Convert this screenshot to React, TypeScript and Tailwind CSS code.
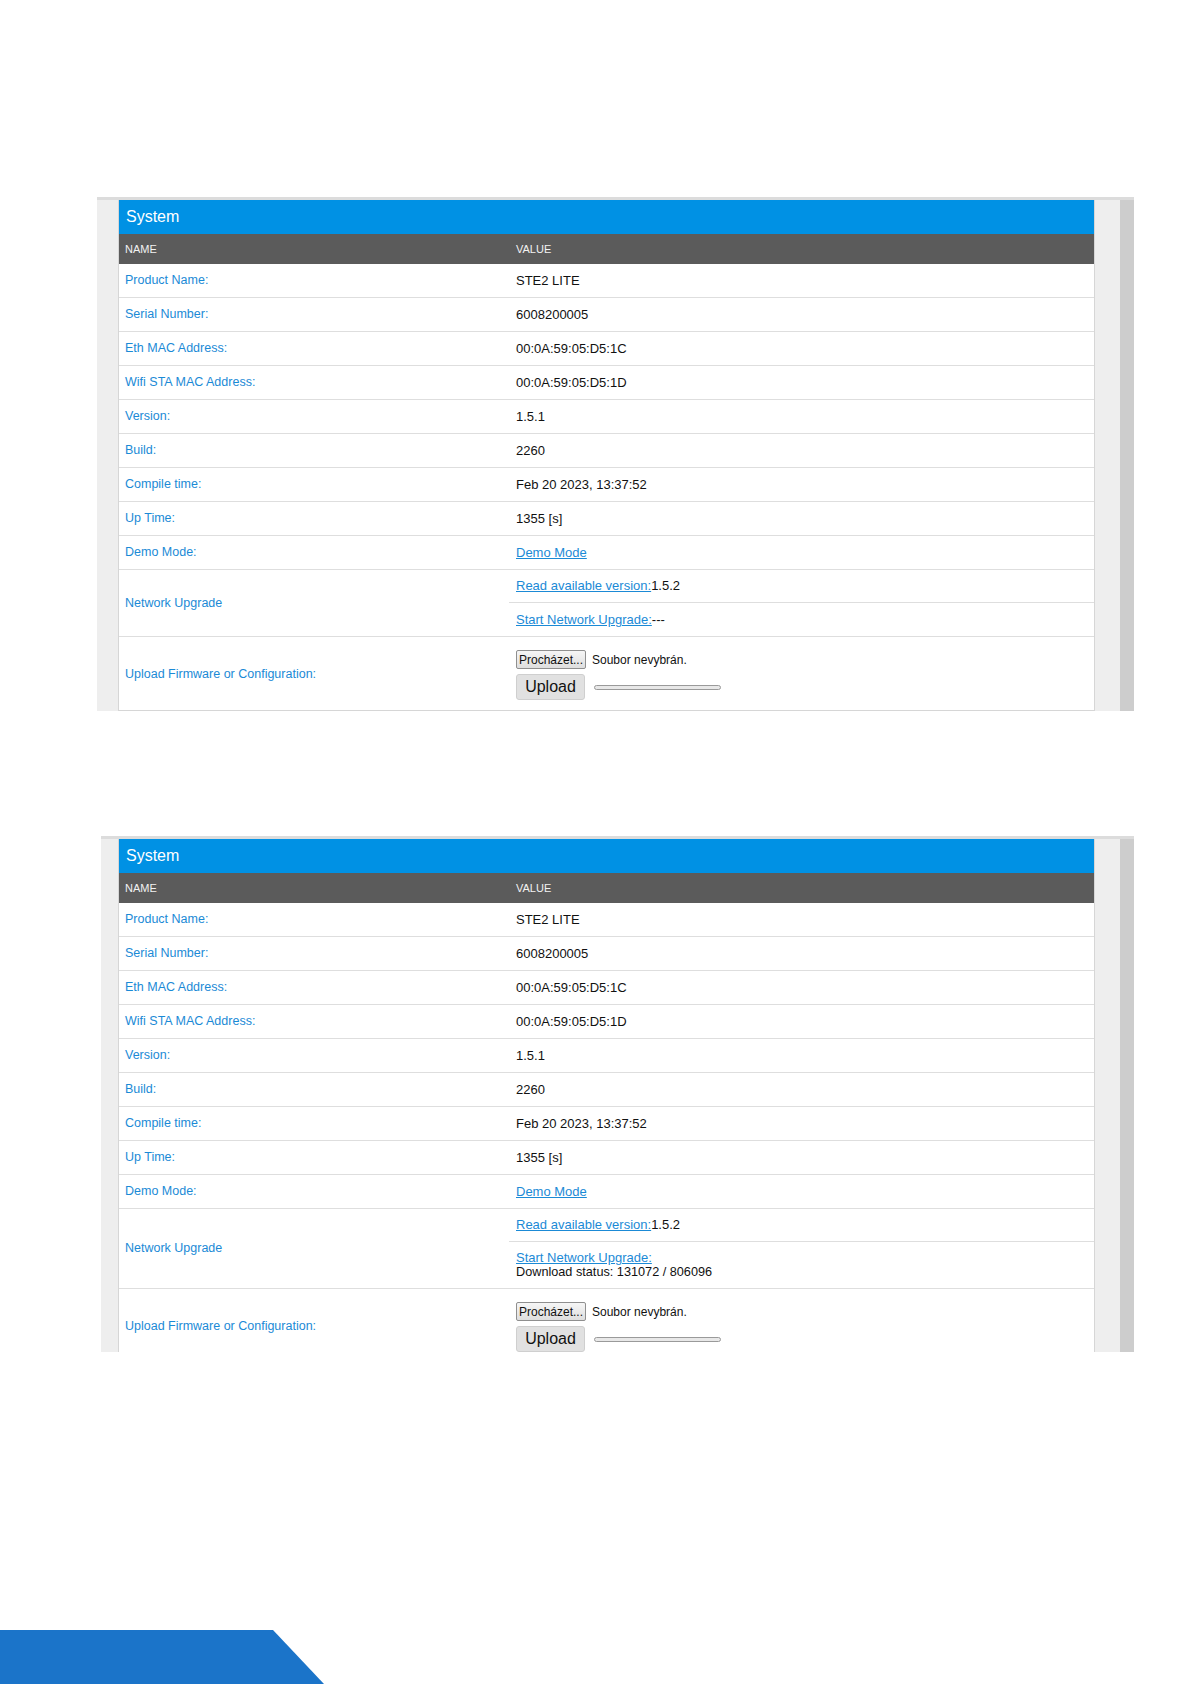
import React from 'react';

const rows: [string, string][] = [
  ['Product Name:', 'STE2 LITE'],
  ['Serial Number:', '6008200005'],
  ['Eth MAC Address:', '00:0A:59:05:D5:1C'],
  ['Wifi STA MAC Address:', '00:0A:59:05:D5:1D'],
  ['Version:', '1.5.1'],
  ['Build:', '2260'],
  ['Compile time:', 'Feb 20 2023, 13:37:52'],
  ['Up Time:', '1355 [s]'],
];

function Row({ label, children }: { label: string; children: React.ReactNode }) {
  return (
    <div className="grid grid-cols-[390px_1fr] h-[34px] items-center border-b border-[#dedede] shrink-0">
      <div className="pl-[6px] text-[#1b8ad6] text-[12.5px]">{label}</div>
      <div className="pl-[7px] text-[#111]">{children}</div>
    </div>
  );
}

function SystemPanel({ downloading, className }: { downloading?: boolean; className: string }) {
  return (
    <div className={`flex bg-[#eeeeee] border-t-[3px] border-[#dcdcdc] overflow-hidden shrink-0 ${className}`}>
      <div className="flex-1" />
      {/* Panel */}
      <div className={`w-[977px] bg-white flex flex-col border-x border-[#d6d6d6] ${downloading ? '' : 'border-b'}`}>
        <div className="h-[34px] bg-[#0091e4] text-white text-[16px] flex items-center pl-[7px] shrink-0">System</div>
        <div className="grid grid-cols-[390px_1fr] h-[30px] items-center bg-[#5b5b5b] text-[#f2f2f2] text-[11px] shrink-0">
          <div className="pl-[6px]">NAME</div>
          <div className="pl-[7px]">VALUE</div>
        </div>

        {rows.map(([k, v]) => (
          <Row key={k} label={k}>
            {v}
          </Row>
        ))}
        <Row label="Demo Mode:">
          <a className="text-[#1b8ad6] underline">Demo Mode</a>
        </Row>

        {/* Network Upgrade */}
        <div className="grid grid-cols-[390px_1fr] border-b border-[#dedede] shrink-0">
          <div className="pl-[6px] text-[#1b8ad6] text-[12.5px] flex items-center">Network Upgrade</div>
          <div className="flex flex-col">
            <div className="h-[33px] flex items-center pl-[7px] border-b border-[#dedede] text-[#111]">
              <a className="text-[#1b8ad6] underline">Read available version:</a>1.5.2
            </div>
            {downloading ? (
              <div className="h-[46px] flex flex-col justify-center pl-[7px] text-[#111] leading-[15px]">
                <a className="text-[#1b8ad6] underline">Start Network Upgrade:</a>
                <span className="text-[12.7px]">Download status: 131072 / 806096</span>
              </div>
            ) : (
              <div className="h-[33px] flex items-center pl-[7px] text-[#111]">
                <a className="text-[#1b8ad6] underline">Start Network Upgrade:</a>---
              </div>
            )}
          </div>
        </div>

        {/* Upload */}
        <div className="grid grid-cols-[390px_1fr] h-[74px] shrink-0">
          <div className="pl-[6px] text-[#1b8ad6] text-[12.5px] flex items-center">Upload Firmware or Configuration:</div>
          <div className="pl-[7px] pt-[13px] flex flex-col gap-[5px]">
            <div className="flex items-center gap-[6px] text-[12px] text-[#111]">
              <span className="h-[19px] w-[70px] flex items-center justify-center border border-[#8f8f8f] rounded-[2px] bg-gradient-to-b from-[#f6f6f6] to-[#dedede]">
                Procházet...
              </span>
              <span>Soubor nevybrán.</span>
            </div>
            <div className="flex items-center gap-[9px]">
              <span className="h-[26px] w-[69px] flex items-center justify-center bg-[#e1e1e1] border border-[#cfcfcf] rounded-[3px] text-[16px] text-[#111]">
                Upload
              </span>
              <span className="h-[5px] w-[127px] rounded-full border border-[#9a9a9a] bg-[#e8e8e8]" />
            </div>
          </div>
        </div>
      </div>
      <div className="w-[25px]" />
      <div className="w-[14px] bg-[#cdcdcd]" />
    </div>
  );
}

export default function App() {
  return (
    <div className="h-[1684px] w-[1191px] bg-white flex flex-col font-['Liberation_Sans',Arial,sans-serif] text-[13px] overflow-hidden">
      <SystemPanel className="mt-[197px] ml-[97px] w-[1037px] h-[514px]" />
      <SystemPanel downloading className="mt-[125px] ml-[101px] w-[1033px] h-[516px]" />

      <svg className="mt-auto block shrink-0" width="324" height="54" viewBox="0 0 324 54">
        <polygon points="0,0 273,0 324,54 0,54" fill="#1b74c9" />
      </svg>
    </div>
  );
}
